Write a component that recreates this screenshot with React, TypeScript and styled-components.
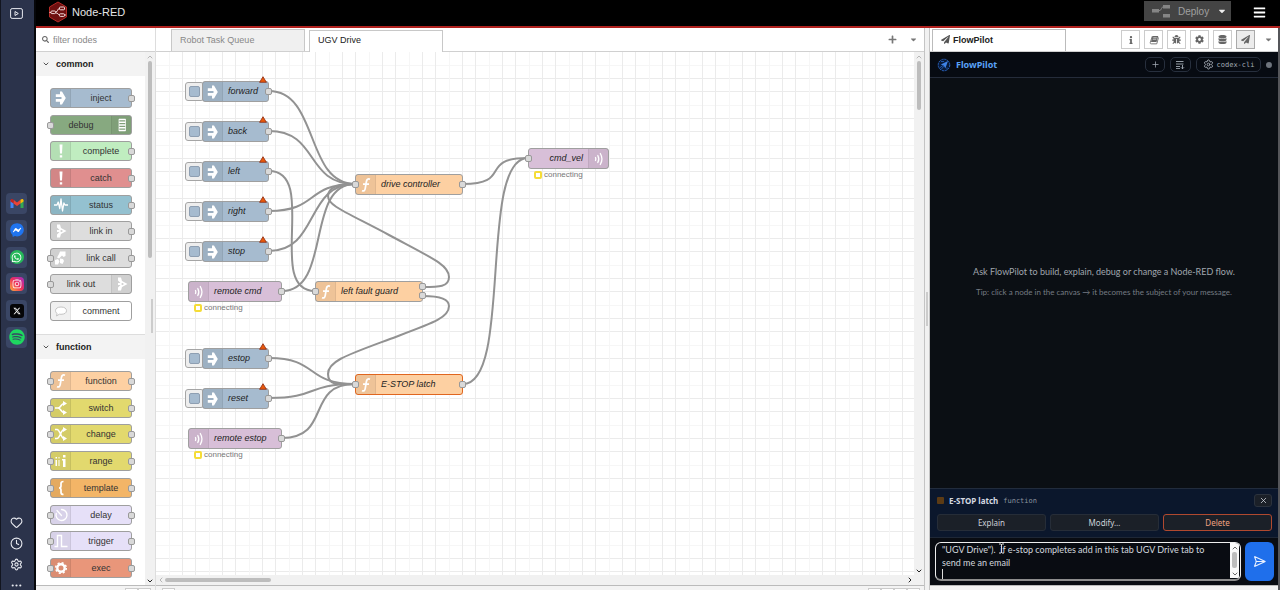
import React from "react";
import styled, { createGlobalStyle, css } from "styled-components";
import {
  FaSearch, FaPlus, FaCaretDown, FaPaperPlane, FaInfo, FaBug, FaCog, FaDatabase, FaBars,
  FaWhatsapp, FaFacebookMessenger, FaSpotify, FaInstagram,
} from "react-icons/fa";
import { FaXTwitter } from "react-icons/fa6";
import { Heart, Clock, Settings, Ellipsis, Plus, X, SendHorizontal, ChevronDown, ChevronUp, ChevronLeft, ChevronRight } from "lucide-react";

const sans = `"Liberation Sans", Arial, sans-serif`;
const ui = `"Noto Sans", "Open Sans", sans-serif`;
const prose = `Lato, "Noto Sans", sans-serif`;
const mono = `"DejaVu Sans Mono", monospace`;

const GlobalStyle = createGlobalStyle`
  *, *::before, *::after { box-sizing: border-box; }
  body { margin: 0; font-family: ${sans}; font-size: 9px; color: #333; background: #fff; overflow: hidden; }
  button, input, textarea { font: inherit; color: inherit; margin: 0; padding: 0; border: 0; background: none; outline: none; }
  svg { display: block; flex: none; }
  h1, h2, p { margin: 0; font-size: inherit; }
`;

/* ---------- frame ---------- */
const Frame = styled.div`
  display: flex;
  height: 100vh;
`;
const Editor = styled.div`
  flex: 1;
  min-width: 0;
  display: flex;
  flex-direction: column;
`;
const Body = styled.div`
  flex: 1;
  min-height: 0;
  display: flex;
  border-right: 2px solid #55565a;
`;

/* ---------- browser rail ---------- */
const Rail = styled.nav`
  width: 36px;
  flex: none;
  background: #2b334b;
  border-left: 1px solid #12151f;
  border-right: 2px solid #06070a;
  display: flex;
  flex-direction: column;
  align-items: center;
  padding: 6px 2px 0 0;
  color: #e8eaf0;
`;
const RailButton = styled.button`
  width: 20px;
  height: 14px;
  display: grid;
  place-items: center;
`;
const RailApps = styled.div`
  margin-top: 173px;
  height: 155px;
  display: flex;
  flex-direction: column;
  justify-content: space-between;
`;
const RailTile = styled.button`
  width: 21px;
  height: 21px;
  border-radius: 4px;
  background: #3a4665;
  display: grid;
  place-items: center;
`;
const RailTools = styled.div`
  margin-top: auto;
  height: 78px;
  display: flex;
  flex-direction: column;
  gap: 8px;
  padding-top: 4px;
`;

/* ---------- top bar ---------- */
const Header = styled.header`
  height: 28px;
  flex: none;
  background: #000;
  border-bottom: 2px solid #b0211e;
  display: flex;
  align-items: center;
  padding: 0 14px 2px 12px;
`;
const Brand = styled.h1`
  flex: 1;
  display: flex;
  align-items: center;
  gap: 4px;
  font-size: 11px;
  font-weight: 400;
  color: #e6e6e6;
`;
const Deploy = styled.div`
  display: flex;
  height: 20px;
  width: 87px;
  background: #444;
  color: #a0a0a0;
  margin: 0 22px 2px 0;
`;
const DeployMain = styled.button`
  flex: 1;
  display: flex;
  align-items: center;
  gap: 8px;
  padding-left: 8px;
  font-size: 10px;
`;
const DeployMenu = styled.button`
  width: 18px;
  display: grid;
  place-items: center;
  color: #eee;
`;
const MenuButton = styled.button`
  color: #fff;
`;

/* ---------- shared bars ---------- */
const Bar = styled.div`
  height: 24px;
  flex: none;
  display: flex;
  align-items: center;
  border-bottom: 1px solid #d0d0d0;
  background: #fff;
`;
const Footer = styled.footer<{ $end?: boolean }>`
  height: 5px;
  flex: none;
  display: flex;
  justify-content: ${(p) => (p.$end ? "flex-end" : "flex-start")};
  padding: 2px 4px 0 6px;
  border-top: 1px solid #bbb;
  background: #f3f3f3;
  overflow: hidden;
`;
const FooterButton = styled.button`
  width: 13px;
  height: 13px;
  flex: none;
  border: 1px solid #ccc;
  background: #fff;
`;
const FooterSpace = styled.span`
  flex: 1;
`;
const ScrollBar = styled.div<{ $horizontal?: boolean; $width?: number }>`
  flex: none;
  display: flex;
  flex-direction: ${(p) => (p.$horizontal ? "row" : "column")};
  align-items: center;
  background: #f1f1f1;
  color: #999;
  ${(p) => (p.$horizontal ? css`height: 10px; padding-right: 10px;` : css`width: ${p.$width ?? 10}px;`)}
`;
const ScrollArrow = styled.span<{ $dark?: boolean }>`
  width: 9px;
  height: 9px;
  flex: none;
  display: grid;
  place-items: center;
  color: ${(p) => (p.$dark ? "#222" : "#999")};
`;
const ScrollThumb = styled.span<{ $w: number; $h: number }>`
  width: ${(p) => p.$w}px;
  height: ${(p) => p.$h}px;
  flex: none;
  border-radius: 2px;
  background: #bdbdbd;
`;
const ScrollRest = styled.span`
  flex: 1;
`;

/* ---------- palette ---------- */
const Palette = styled.aside`
  width: 120px;
  flex: none;
  display: flex;
  flex-direction: column;
  border-right: 1px solid #ddd;
`;
const Filter = styled.label`
  display: flex;
  align-items: center;
  gap: 4px;
  width: 100%;
  padding-left: 6px;
  color: #666;
  input { width: 90px; }
  input::placeholder { color: #888; opacity: 1; }
`;
const PaletteBody = styled.div`
  position: relative;
  flex: 1;
  min-height: 0;
  display: flex;
  &::after {
    content: "";
    position: absolute;
    right: 2px;
    top: calc(50% - 20px);
    width: 2px;
    height: 34px;
    background: #ccc;
  }
`;
const PaletteList = styled.div`
  flex: 1;
  overflow: hidden;
`;
const Category = styled.section`
  border-bottom: 1px solid #ddd;
`;
const CategoryTitle = styled.button`
  width: 100%;
  height: 24px;
  display: flex;
  align-items: center;
  gap: 6px;
  padding-left: 6px;
  background: #f3f3f3;
  font-weight: 700;
  color: #222;
  svg { color: #555; }
`;
const CategoryNodes = styled.div<{ $height: number }>`
  height: ${(p) => p.$height}px;
  margin: 12px 13px 13px 14px;
  display: flex;
  flex-direction: column;
  justify-content: space-between;
`;

/* ---------- flow nodes ---------- */
const NodeBox = styled.div<{ $color: string; $selected?: boolean; $height: number }>`
  position: relative;
  height: ${(p) => p.$height}px;
  display: flex;
  border: 1px solid ${(p) => (p.$selected ? "#e0661f" : "#9f9f9f")};
  border-radius: 3px;
  background: ${(p) => p.$color};
`;
const NodeIcon = styled.span<{ $right?: boolean }>`
  order: ${(p) => (p.$right ? 2 : 0)};
  width: 20px;
  flex: none;
  display: grid;
  place-items: center;
  background: rgba(0, 0, 0, 0.06);
  border: solid rgba(0, 0, 0, 0.06);
  border-width: ${(p) => (p.$right ? "0 0 0 1px" : "0 1px 0 0")};
  overflow: hidden;
`;
const PaletteLabel = styled.span`
  order: 1;
  flex: 1;
  line-height: 18px;
  text-align: center;
  color: #333;
`;
const FlowLabel = styled.span<{ $right?: boolean }>`
  order: 1;
  flex: 1;
  line-height: 19px;
  font-style: italic;
  white-space: nowrap;
  color: #222;
  text-align: ${(p) => (p.$right ? "right" : "left")};
  padding: 0 5px;
`;
const Port = styled.i<{ $side: "left" | "right"; $top: number }>`
  position: absolute;
  ${(p) => p.$side}: -4px;
  top: ${(p) => p.$top}px;
  width: 7px;
  height: 7px;
  border: 1px solid #999;
  border-radius: 2px;
  background: #d9d9d9;
`;
const Placed = styled.div<{ $x: number; $y: number; $w: number }>`
  position: absolute;
  left: ${(p) => p.$x}px;
  top: ${(p) => p.$y}px;
  width: ${(p) => p.$w}px;
`;
const InjectButton = styled.button`
  position: absolute;
  left: -17px;
  top: 1px;
  width: 19px;
  height: 19px;
  padding: 3px;
  border: 1px solid #a5a5a5;
  border-radius: 3px;
  background: #eee;
  &::before {
    content: "";
    display: block;
    width: 11px;
    height: 11px;
    border: 1px solid #8e9fb2;
    border-radius: 2px;
    background: #a6bbcf;
  }
`;
const Warning = styled.svg`
  position: absolute;
  right: 1px;
  top: -6px;
`;
const Status = styled.div`
  display: flex;
  align-items: center;
  gap: 2px;
  margin: 1px 0 0 6px;
  font-size: 8px;
  line-height: 9px;
  color: #777;
  &::before {
    content: "";
    width: 8px;
    height: 8px;
    border: 2px solid #f5dc36;
    border-radius: 2px;
    background: #fff;
  }
`;

/* ---------- workspace ---------- */
const Workspace = styled.main`
  flex: 1;
  min-width: 0;
  display: flex;
  flex-direction: column;
`;
const TabBar = styled(Bar)`
  align-items: flex-end;
  gap: 4px;
  padding: 0 6px 0 15px;
`;
const Tab = styled.button<{ $active?: boolean }>`
  width: 134px;
  height: 22px;
  margin-bottom: ${(p) => (p.$active ? "-1px" : "0")};
  padding: 0 0 ${(p) => (p.$active ? "3px" : "2px")} 8px;
  border: 1px solid #c8c8c8;
  border-bottom: 0;
  text-align: left;
  background: ${(p) => (p.$active ? "#fff" : "#f0f0f0")};
  color: ${(p) => (p.$active ? "#222" : "#888")};
`;
const TabTools = styled.div`
  margin-left: auto;
  height: 23px;
  display: flex;
  align-items: center;
  gap: 12px;
  color: #777;
`;
const CanvasArea = styled.div`
  flex: 1;
  min-height: 0;
  display: flex;
`;
const gridStops = `transparent 13px, #f6f6f6 13px 14px, transparent 14px 26px, #ebebeb 26px 27px, transparent 27px 39px, #ebebeb 39px 40px`;
const Canvas = styled.div`
  position: relative;
  flex: 1;
  overflow: hidden;
  background-color: #fff;
  background-image: linear-gradient(90deg, ${gridStops}), linear-gradient(${gridStops});
  background-size: 40px 40px;
`;
const Wires = styled.svg`
  position: absolute;
  inset: 0;
  width: 100%;
  height: 100%;
`;
const Splitter = styled.div`
  width: 6px;
  flex: none;
  display: flex;
  align-items: center;
  justify-content: center;
  border: solid #c4c4c4;
  border-width: 0 1px;
  background: #f1f1f1;
  &::before { content: ""; width: 2px; height: 34px; background: #ccc; }
`;

/* ---------- sidebar ---------- */
const Sidebar = styled.aside`
  width: 348px;
  flex: none;
  display: flex;
  flex-direction: column;
  font-family: ${ui};
`;
const SideBar = styled(Bar)`
  gap: 4px;
  padding: 0 0 0 2px;
  font-family: ${sans};
`;
const SideTab = styled.button`
  width: 134px;
  height: 22px;
  margin-right: auto;
  align-self: flex-end;
  display: flex;
  align-items: center;
  gap: 3px;
  padding: 0 0 2px 8px;
  border: 1px solid #bbb;
  border-bottom: 0;
  background: #fff;
  font-weight: 700;
  color: #222;
`;
const SideIcon = styled.button<{ $active?: boolean }>`
  width: 19px;
  height: 19px;
  display: grid;
  place-items: center;
  border: 1px solid ${(p) => (p.$active ? "#aaa" : "#ccc")};
  background: ${(p) => (p.$active ? "#ececec" : "#fff")};
  color: #666;
`;
const SideMenu = styled.button`
  width: 19px;
  display: grid;
  place-items: center;
  color: #777;
`;
const PilotHead = styled.div`
  height: 26px;
  flex: none;
  display: flex;
  align-items: center;
  gap: 5px;
  padding: 0 6px 0 7px;
  background: #070b12;
  border-bottom: 1px solid #252c3a;
`;
const PilotName = styled.h2`
  flex: 1;
  font-size: 9px;
  font-weight: 700;
  color: #5aa2f7;
`;
const Pill = styled.button<{ $w: number }>`
  width: ${(p) => p.$w}px;
  height: 15px;
  display: flex;
  align-items: center;
  justify-content: center;
  gap: 3px;
  border: 1px solid #272f3d;
  border-radius: 5px;
  color: #a4abb5;
  font: 7px ${mono};
`;
const Dot = styled.span`
  width: 6px;
  height: 6px;
  border-radius: 50%;
  background: #6e747d;
`;
const Chat = styled.div`
  flex: 1;
  display: flex;
  flex-direction: column;
  align-items: center;
  justify-content: center;
  gap: 8px;
  padding-bottom: 2px;
  background: #0b0f14;
  color: #a0a6ae;
  font-family: ${prose};
  font-size: 9px;
  line-height: 13px;
  text-align: center;
`;
const Tip = styled.p`
  font-size: 8px;
  color: #757b83;
`;
const Context = styled.section`
  height: 50px;
  flex: none;
  display: flex;
  flex-direction: column;
  gap: 6px;
  padding: 4px 6px 0 7px;
  border-top: 1px solid #222c3d;
  border-bottom: 1px solid #1e2736;
  background: #0b172c;
  color: #d5dae1;
`;
const ContextHead = styled.div`
  display: flex;
  align-items: center;
  height: 15px;
  gap: 5px;
  strong { font-size: 8px; }
  code { flex: 1; font: 7px ${mono}; color: #8a929d; }
  &::before {
    content: "";
    width: 7px;
    height: 7px;
    border-radius: 1px;
    background: #5c3b14;
  }
`;
const CloseButton = styled.button`
  width: 18px;
  height: 13px;
  display: grid;
  place-items: center;
  border: 1px solid #2b323d;
  border-radius: 3px;
  background: #1b2028;
`;
const Actions = styled.div`
  display: grid;
  grid-template-columns: repeat(3, 1fr);
  gap: 4px;
`;
const Action = styled.button<{ $danger?: boolean }>`
  height: 17px;
  border: 1px solid ${(p) => (p.$danger ? "#b0492f" : "#262d38")};
  border-radius: 3px;
  background: #1b2028;
  font-size: 8px;
  line-height: 13px;
  color: ${(p) => (p.$danger ? "#f0a080" : "#ccd1d8")};
`;
const Composer = styled.form`
  height: 47px;
  flex: none;
  display: flex;
  gap: 4px;
  padding: 4px 4px 4px 5px;
  background: #090c12;
`;
const Field = styled.div`
  position: relative;
  flex: 1;
  display: flex;
  padding: 0 1px 1px;
  border: 1px solid #eee;
  border-bottom: 2px solid #8d8d8d;
  border-radius: 6px;
  overflow: hidden;
  textarea {
    flex: 1;
    padding: 0 5px;
    resize: none;
    overflow: hidden;
    font-family: ${prose};
    font-size: 9px;
    line-height: 13px;
    color: #d3d8df;
  }
`;
const FieldScroll = styled(ScrollBar)`
  background: #fafafa;
  color: #444;
`;
const Caret = styled.span`
  position: absolute;
  left: 6px;
  bottom: 0;
  width: 1px;
  height: 10px;
  background: #ddd;
`;
const Pointer = styled.svg`
  position: absolute;
  left: 62px;
  top: 0;
`;
const Send = styled.button`
  width: 29px;
  display: grid;
  place-items: center;
  border-radius: 6px;
  background: #1f6feb;
  color: #e9f1ff;
`;

/* ---------- node glyphs ---------- */
type Glyph =
  | "inject" | "debug" | "alert" | "status" | "link" | "linkcall" | "comment"
  | "function" | "switch" | "change" | "range" | "template" | "delay" | "trigger" | "exec" | "wave";

const line = { fill: "none", stroke: "#fff", strokeWidth: 1.6 };
const glyphs: Record<Glyph, React.ReactNode> = {
  inject: <path fill="#fff" d="M9 3.500h2l3.800 6.500-3.800 6.500H9v-2.800H4.800v-2.600h5.700v-2.200H4.800V6.300H9z" />,
  debug: (
    <g>
      <path {...line} strokeWidth={1.5} d="M7 4.600h6.500M7 7.300h6.500M7 10h6.500M7 12.700h6.500M7 15.400h6.500" />
      <path {...line} strokeWidth={0.7} d="M7 4v12M13.500 4v12" />
    </g>
  ),
  alert: <path fill="#fff" d="M8.500 3.500h3l-.5 9H9zM8.800 14.2h2.400v2.300H8.800z" />,
  status: <path {...line} strokeWidth={1.3} strokeLinejoin="round" d="M3 10h3l1.2-3 1.6 6.5L10 4l1.5 12 1.4-8 1.1 2h3" />,
  link: (
    <g>
      <path fill="#fff" d="M6 3.500h3l1 3.500 5.500 3-5.500 3-1 3.500H6v-3l2.500-2.500H6V9h2.500L6 6.500z" />
      <circle cx="10.500" cy="10" r="1.100" fill="#cfcfcf" />
    </g>
  ),
  linkcall: (
    <g>
      <path fill="#fff" d="M9 3.500h5.500V8l-2 1-1.500-1.500-3 3-2-1 2-3.500zM9 10.500l3 .5 1 2-1.500 3-2.500-1zM4 12l3-1 1.500 2.500-1.500 3H4z" />
    </g>
  ),
  comment: <path fill="#fff" stroke="#c4c4c4" d="M10 6c3.500 0 5.500 1.500 5.500 3.700S13.500 13.300 10 13.300c-.6 0-1 0-1.600-.1L5.500 15l.6-2.600C5 11.700 4.500 10.800 4.500 9.700 4.500 7.500 6.500 6 10 6z" />,
  function: <path {...line} strokeWidth={1.7} d="M14 4.200c-2-.8-3.200.2-3.600 2.300l-1.200 7.200c-.3 1.900-1.400 2.700-3.200 2M7 9.200h6" />,
  switch: (
    <g>
      <path {...line} d="M4 10h3c3 0 3-4.500 6-4.500M7 10c3 0 3 4.500 6 4.500" />
      <path fill="#fff" d="M12 3l4 2.500-4 2.500zM12 12l4 2.500-4 2.500z" />
    </g>
  ),
  change: (
    <g>
      <path {...line} d="M4 5.500h2c3 0 4 9 7 9M4 14.500h2c3 0 4-9 7-9" />
      <path fill="#fff" d="M12 3l4 2.500-4 2.500zM12 12l4 2.500-4 2.500z" />
    </g>
  ),
  range: <path fill="#fff" d="M4.500 9H6v6H4.500zM4.500 6H6v1.500H4.500zM7.500 9h1v6h-1zM7.500 6h1v1.500h-1zM11 8h3.500v8H12V9.500h-1zM12 4h2.500v2.500H12z" />,
  template: <path {...line} strokeWidth={1.7} d="M12.500 3.500c-2 0-2.500.6-2.500 2v2.500c0 1.300-.6 2-2 2 1.400 0 2 .7 2 2v2.500c0 1.400.5 2 2.500 2" />,
  delay: <path {...line} strokeWidth={1.3} d="M6 5.500l4.500 5M10.500 4.500a5.500 5.500 0 1 1-5.300 4" strokeLinecap="round" />,
  trigger: <path {...line} strokeWidth={1.4} d="M3.500 15.500h3v-11h4v11h6" />,
  exec: (
    <g fill="none" stroke="#fff">
      <circle cx="10" cy="10" r="3.700" strokeWidth="2.400" />
      <circle cx="10" cy="10" r="5.300" strokeWidth="1.500" strokeDasharray="2.100 2.060" />
    </g>
  ),
  wave: <path {...line} strokeWidth={1.3} strokeLinecap="round" d="M6.500 8.500q.7 1.500 0 3M8.800 6.500q2 3.500 0 7M11.300 4.500q3.300 5.500 0 11" />,
};
const NodeGlyph = ({ name }: { name: Glyph }) => (
  <svg width="18" height="18" viewBox="1 1 18 18" aria-hidden="true">{glyphs[name]}</svg>
);

/* ---------- data ---------- */
type PaletteItem = { label: string; color: string; icon: Glyph; input?: boolean; output?: boolean; iconRight?: boolean };
const common: PaletteItem[] = [
  { label: "inject", color: "#a6bbcf", icon: "inject", output: true },
  { label: "debug", color: "#87a980", icon: "debug", input: true, iconRight: true },
  { label: "complete", color: "#c0edc0", icon: "alert", output: true },
  { label: "catch", color: "#e08f8f", icon: "alert", output: true },
  { label: "status", color: "#94c1d0", icon: "status", output: true },
  { label: "link in", color: "#dddddd", icon: "link", output: true },
  { label: "link call", color: "#dddddd", icon: "linkcall", input: true, output: true },
  { label: "link out", color: "#dddddd", icon: "link", input: true, iconRight: true },
  { label: "comment", color: "#ffffff", icon: "comment" },
];
const functions: PaletteItem[] = [
  { label: "function", color: "#fdd0a2", icon: "function", input: true, output: true },
  { label: "switch", color: "#e2d96e", icon: "switch", input: true, output: true },
  { label: "change", color: "#e2d96e", icon: "change", input: true, output: true },
  { label: "range", color: "#e2d96e", icon: "range", input: true, output: true },
  { label: "template", color: "#f3b567", icon: "template", input: true, output: true },
  { label: "delay", color: "#e6e0f8", icon: "delay", input: true, output: true },
  { label: "trigger", color: "#e6e0f8", icon: "trigger", input: true, output: true },
  { label: "exec", color: "#e9967a", icon: "exec", input: true, output: true },
];

type Kind = "inject" | "function" | "subscribe" | "publish";
type FlowNode = { id: string; kind: Kind; x: number; y: number; w: number; outputs?: number; selected?: boolean };
const flow: FlowNode[] = [
  { id: "forward", kind: "inject", x: 46, y: 29, w: 67 },
  { id: "back", kind: "inject", x: 46, y: 69, w: 67 },
  { id: "left", kind: "inject", x: 46, y: 109, w: 67 },
  { id: "right", kind: "inject", x: 46, y: 149, w: 67 },
  { id: "stop", kind: "inject", x: 46, y: 189, w: 67 },
  { id: "remote cmd", kind: "subscribe", x: 32, y: 229, w: 94 },
  { id: "estop", kind: "inject", x: 46, y: 296, w: 67 },
  { id: "reset", kind: "inject", x: 46, y: 336, w: 67 },
  { id: "remote estop", kind: "subscribe", x: 32, y: 376, w: 94 },
  { id: "drive controller", kind: "function", x: 199, y: 122, w: 108 },
  { id: "left fault guard", kind: "function", x: 159, y: 229, w: 108, outputs: 2 },
  { id: "E-STOP latch", kind: "function", x: 199, y: 322, w: 108, selected: true },
  { id: "cmd_vel", kind: "publish", x: 372, y: 96, w: 81, outputs: 0 },
];
const links: [string, string][] = [
  ["forward", "drive controller"],
  ["back", "drive controller"],
  ["right", "drive controller"],
  ["stop", "drive controller"],
  ["remote cmd", "drive controller"],
  ["left", "left fault guard"],
  ["estop", "E-STOP latch"],
  ["reset", "E-STOP latch"],
  ["remote estop", "E-STOP latch"],
  ["drive controller", "cmd_vel"],
  ["E-STOP latch", "cmd_vel"],
];
const backLinks = [
  "M267 235 C283 235 293 235 293 225 C293 213 276 206 233 183 S172 154 172 144 S186 132 199 132",
  "M267 244 C281 244 293 246 293 254 C293 266 277 271 234 287 S172 309 172 322 S186 332 199 332",
];
const find = (id: string) => flow.find((n) => n.id === id)!;
const wirePath = ([from, to]: [string, string]) => {
  const a = find(from);
  const b = find(to);
  const x1 = a.x + a.w;
  const y1 = a.y + 10;
  const y2 = b.y + 10;
  return `M${x1} ${y1} C${x1 + 50} ${y1} ${b.x - 50} ${y2} ${b.x} ${y2}`;
};

const kinds: Record<Kind, { color: string; icon: Glyph }> = {
  inject: { color: "#a6bbcf", icon: "inject" },
  function: { color: "#fdd0a2", icon: "function" },
  subscribe: { color: "#d8bfd8", icon: "wave" },
  publish: { color: "#d8bfd8", icon: "wave" },
};

/* ---------- pieces ---------- */
const PaletteGroup = ({ title, items, height }: { title: string; items: PaletteItem[]; height: number }) => (
  <Category>
    <CategoryTitle>
      <ChevronDown size={8} strokeWidth={3} />
      {title}
    </CategoryTitle>
    <CategoryNodes $height={height}>
      {items.map((n) => (
        <NodeBox key={n.label} $color={n.color} $height={20}>
          <NodeIcon $right={n.iconRight}><NodeGlyph name={n.icon} /></NodeIcon>
          <PaletteLabel>{n.label}</PaletteLabel>
          {n.input && <Port $side="left" $top={6} />}
          {n.output && <Port $side="right" $top={6} />}
        </NodeBox>
      ))}
    </CategoryNodes>
  </Category>
);

const CanvasNode = ({ node }: { node: FlowNode }) => {
  const { color, icon } = kinds[node.kind];
  const outputs = node.outputs ?? 1;
  const ros = node.kind === "subscribe" || node.kind === "publish";
  return (
    <Placed $x={node.x} $y={node.y} $w={node.w}>
      {node.kind === "inject" && <InjectButton aria-label={`Inject ${node.id}`} />}
      <NodeBox $color={color} $selected={node.selected} $height={21}>
        <NodeIcon $right={node.kind === "publish"}><NodeGlyph name={icon} /></NodeIcon>
        <FlowLabel $right={node.kind === "publish"}>{node.id}</FlowLabel>
        {(node.kind === "function" || node.kind === "publish") && <Port $side="left" $top={6} />}
        {outputs === 1 && <Port $side="right" $top={6} />}
        {outputs === 2 && (
          <>
            <Port $side="right" $top={1} />
            <Port $side="right" $top={10} />
          </>
        )}
        {node.kind === "inject" && (
          <Warning width="8" height="7" viewBox="0 0 8 7">
            <path d="M4 .7L7.400 6.300H.6z" fill="#e8590c" stroke="#8c2a10" strokeWidth=".8" />
          </Warning>
        )}
      </NodeBox>
      {ros && <Status>connecting</Status>}
    </Placed>
  );
};

const Logo = () => (
  <svg width="20" height="22" viewBox="0 0 20 22" aria-hidden="true">
    <path d="M10 1l8.500 5v10L10 21l-8.500-5V6z" fill="#6e1010" stroke="#b52a26" strokeWidth="1" />
    <g fill="none" stroke="#f0dada" strokeWidth="1">
      <path d="M1.500 11.500H4M7.500 11c3 0 1.500-3.500 4-3.500M7.500 11.800c3 0 2 2.200 5 2.200h5.500" />
      <rect x="11.500" y="6" width="5" height="2.800" rx=".8" />
      <rect x="11.500" y="12.800" width="5" height="2.600" rx=".8" fill="#6e1010" />
      <rect x="3" y="10" width="4.500" height="2.600" rx=".8" fill="#6e1010" />
    </g>
  </svg>
);

const DeployIcon = () => (
  <svg width="18" height="13" viewBox="0 0 18 13" aria-hidden="true">
    <g fill="#858585">
      <rect x="0" y="4" width="7" height="3.500" />
      <rect x="11" y="0" width="7" height="3.500" />
      <rect x="11" y="9" width="7" height="3.500" />
    </g>
    <path d="M7 5.700c3 0 2-4 4.500-4" fill="none" stroke="#858585" />
  </svg>
);

const Book = () => (
  <svg width="10" height="10" viewBox="0 0 20 20" aria-hidden="true">
    <path d="M7 2h11.500L15 14H4z" fill="currentColor" />
    <path d="M8.500 5.500h7M7.500 8.500h7" stroke="#fff" strokeWidth="1.200" />
    <path d="M6.500 2.500L2.500 15c-.5 1.600.4 2.700 2 2.700h11L19 5" fill="none" stroke="currentColor" strokeWidth="1.700" />
  </svg>
);

const PilotLogo = () => (
  <svg width="14" height="14" viewBox="0 0 14 14" aria-hidden="true">
    <circle cx="7" cy="7" r="5.800" fill="#081a38" stroke="#2a63bf" strokeDasharray="2.200 .8" />
    <path d="M2.500 10L8 6M4 11.500L8 7M4 3.500h3M10 9.500v2" stroke="#2d6fd6" strokeWidth=".7" />
    <path d="M11 3L8.300 10.500 6.800 7.500 3.800 6.400z" fill="#3f83e6" />
  </svg>
);

const Gmail = () => (
  <svg width="14" height="11" viewBox="0 0 28 22" aria-hidden="true">
    <path d="M1 4v16h6V9z" fill="#4285f4" />
    <path d="M27 4v16h-6V9z" fill="#34a853" />
    <path d="M7 3.500l7 5.500 7-5.500V11l-7 5-7-5z" fill="#ea4335" />
    <path d="M21 3.500C24 1 27 2 27 5v2l-6 4z" fill="#fbbc04" />
    <path d="M7 3.500C4 1 1 2 1 5v2l6 4z" fill="#c5221f" />
  </svg>
);

const Messenger = () => (
  <svg width="14" height="14" viewBox="0 0 14 14" aria-hidden="true">
    <circle cx="7" cy="7" r="5" fill="#fff" />
    <FaFacebookMessenger size={14} color="#1f74f0" />
  </svg>
);

const InstagramTile = () => (
  <svg width="14" height="14" viewBox="0 0 14 14" aria-hidden="true">
    <defs>
      <linearGradient id="insta" x1="0" y1="1" x2="1" y2="0">
        <stop offset="0" stopColor="#fdb03c" />
        <stop offset=".5" stopColor="#ee2f5b" />
        <stop offset="1" stopColor="#a12bc4" />
      </linearGradient>
    </defs>
    <rect width="14" height="14" rx="4" fill="url(#insta)" />
    <FaInstagram x="2" y="2" size={10} color="#fff" />
  </svg>
);

const XTile = styled.span`
  width: 14px;
  height: 14px;
  display: grid;
  place-items: center;
  border-radius: 3px;
  background: #050507;
  color: #fff;
`;

const WhatsappTile = styled.span`
  width: 14px;
  height: 14px;
  display: grid;
  place-items: center;
  border-radius: 50%;
  background: #25b85a;
  color: #fff;
`;

export default function App() {
  return (
    <>
      <GlobalStyle />
      <Frame>
        <Rail>
          <RailButton aria-label="Player">
            <svg width="13" height="11" viewBox="0 0 13 11" fill="none" stroke="currentColor">
              <rect x=".6" y=".6" width="11.800" height="9.800" rx="1.500" />
              <path d="M5 3.500v4l3.300-2z" />
            </svg>
          </RailButton>
          <RailApps>
            <RailTile aria-label="Gmail"><Gmail /></RailTile>
            <RailTile aria-label="Messenger"><Messenger /></RailTile>
            <RailTile aria-label="WhatsApp"><WhatsappTile><FaWhatsapp size={11} /></WhatsappTile></RailTile>
            <RailTile aria-label="Instagram"><InstagramTile /></RailTile>
            <RailTile aria-label="X"><XTile><FaXTwitter size={8} /></XTile></RailTile>
            <RailTile aria-label="Spotify"><FaSpotify size={16} color="#1ed760" /></RailTile>
          </RailApps>
          <RailTools>
            <RailButton aria-label="Favourites"><Heart size={13} strokeWidth={2} /></RailButton>
            <RailButton aria-label="History"><Clock size={13} strokeWidth={2} /></RailButton>
            <RailButton aria-label="Settings"><Settings size={13} strokeWidth={2} /></RailButton>
            <RailButton aria-label="More"><Ellipsis size={13} strokeWidth={2} /></RailButton>
          </RailTools>
        </Rail>

        <Editor>
          <Header>
            <Brand><Logo />Node-RED</Brand>
            <Deploy>
              <DeployMain><DeployIcon />Deploy</DeployMain>
              <DeployMenu aria-label="Deploy options"><FaCaretDown size={10} /></DeployMenu>
            </Deploy>
            <MenuButton aria-label="Main menu"><FaBars size={13} /></MenuButton>
          </Header>

          <Body>
            <Palette>
              <Bar>
                <Filter>
                  <FaSearch size={7} />
                  <input type="text" placeholder="filter nodes" aria-label="filter nodes" />
                </Filter>
              </Bar>
              <PaletteBody>
                <PaletteList>
                  <PaletteGroup title="common" items={common} height={233} />
                  <PaletteGroup title="function" items={functions} height={207} />
                </PaletteList>
                <ScrollBar $width={10}>
                  <ScrollArrow><ChevronUp size={8} /></ScrollArrow>
                  <ScrollThumb $w={4} $h={197} />
                  <ScrollRest />
                  <ScrollArrow $dark><ChevronDown size={8} strokeWidth={3} /></ScrollArrow>
                </ScrollBar>
              </PaletteBody>
              <Footer $end>
                <FooterButton aria-label="Collapse all" />
                <FooterButton aria-label="Expand all" />
              </Footer>
            </Palette>

            <Workspace>
              <TabBar>
                <Tab>Robot Task Queue</Tab>
                <Tab $active>UGV Drive</Tab>
                <TabTools>
                  <button aria-label="Add flow"><FaPlus size={9} /></button>
                  <button aria-label="List flows"><FaCaretDown size={9} /></button>
                </TabTools>
              </TabBar>
              <CanvasArea>
                <Canvas>
                  <Wires fill="none" stroke="#929292" strokeWidth="2">
                    {links.map((l) => <path key={l.join()} d={wirePath(l)} />)}
                    {backLinks.map((d) => <path key={d} d={d} />)}
                  </Wires>
                  {flow.map((n) => <CanvasNode key={n.id} node={n} />)}
                </Canvas>
                <ScrollBar>
                  <ScrollArrow><ChevronUp size={8} /></ScrollArrow>
                  <ScrollThumb $w={4} $h={49} />
                  <ScrollRest />
                  <ScrollArrow $dark><ChevronDown size={8} strokeWidth={3} /></ScrollArrow>
                </ScrollBar>
              </CanvasArea>
              <ScrollBar $horizontal>
                <ScrollArrow><ChevronLeft size={8} /></ScrollArrow>
                <ScrollThumb $w={106} $h={4} />
                <ScrollRest />
                <ScrollArrow $dark><ChevronRight size={8} strokeWidth={3} /></ScrollArrow>
              </ScrollBar>
              <Footer>
                <FooterButton aria-label="Search flows" />
                <FooterSpace />
                <FooterButton aria-label="Toggle navigator" />
                <FooterButton aria-label="Zoom out" />
                <FooterButton aria-label="Reset zoom" />
                <FooterButton aria-label="Zoom in" />
              </Footer>
            </Workspace>

            <Splitter />

            <Sidebar>
              <SideBar>
                <SideTab><FaPaperPlane size={9} color="#555" />FlowPilot</SideTab>
                <SideIcon aria-label="Info"><FaInfo size={8} /></SideIcon>
                <SideIcon aria-label="Help"><Book /></SideIcon>
                <SideIcon aria-label="Debug"><FaBug size={9} /></SideIcon>
                <SideIcon aria-label="Configuration"><FaCog size={9} /></SideIcon>
                <SideIcon aria-label="Context data"><FaDatabase size={9} /></SideIcon>
                <SideIcon aria-label="FlowPilot" $active><FaPaperPlane size={9} /></SideIcon>
                <SideMenu aria-label="Sidebar tabs"><FaCaretDown size={9} /></SideMenu>
              </SideBar>
              <PilotHead>
                <PilotLogo />
                <PilotName>FlowPilot</PilotName>
                <Pill $w={20} aria-label="New chat"><Plus size={9} /></Pill>
                <Pill $w={21} aria-label="Sessions">
                  <svg width="9" height="8" viewBox="0 0 9 8" fill="none" stroke="currentColor">
                    <path d="M0 .5h7.500M0 3h7.500M0 5.500h4M0 7.600h4M6.500 4v4M5 6.300l1.500 1.500L8 6.300" strokeWidth=".9" />
                  </svg>
                </Pill>
                <Pill $w={65}><Settings size={11} />codex-cli</Pill>
                <Dot />
              </PilotHead>
              <Chat>
                <p>Ask FlowPilot to build, explain, debug or change a Node-RED flow.</p>
                <Tip>Tip: click a node in the canvas → it becomes the subject of your message.</Tip>
              </Chat>
              <Context>
                <ContextHead>
                  <strong>E-STOP latch</strong>
                  <code>function</code>
                  <CloseButton aria-label="Clear selection"><X size={9} /></CloseButton>
                </ContextHead>
                <Actions>
                  <Action>Explain</Action>
                  <Action>Modify…</Action>
                  <Action $danger>Delete</Action>
                </Actions>
              </Context>
              <Composer>
                <Field>
                  <textarea
                    aria-label="Message"
                    defaultValue={'"UGV Drive").  if e-stop completes add in this tab UGV Drive tab to send me an email\n'}
                  />
                  <Caret />
                  <Pointer width="7" height="11" viewBox="0 0 7 11">
                    <path d="M1 1h2l.5.500L4 1h2M3.500 1v9M1 10h2l.5-.5.5.5h2" fill="none" stroke="#ddd" />
                  </Pointer>
                  <FieldScroll $width={9}>
                    <ScrollArrow $dark><ChevronUp size={8} /></ScrollArrow>
                    <ScrollThumb $w={5} $h={16} />
                    <ScrollRest />
                    <ScrollArrow $dark><ChevronDown size={8} /></ScrollArrow>
                  </FieldScroll>
                </Field>
                <Send type="button" aria-label="Send"><SendHorizontal size={13} /></Send>
              </Composer>
              <Footer />
            </Sidebar>
          </Body>
        </Editor>
      </Frame>
    </>
  );
}
